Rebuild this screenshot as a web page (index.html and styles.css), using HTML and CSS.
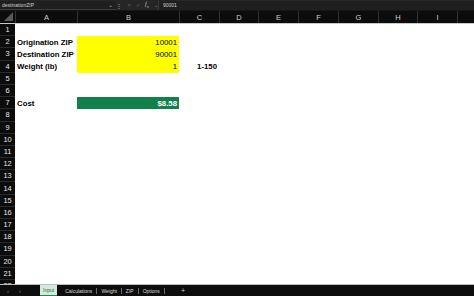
FILE: index.html
```html
<!DOCTYPE html>
<html>
<head>
<meta charset="utf-8">
<link rel="stylesheet" href="styles.css">
</head>
<body>
<div class="app">
  <div class="fbar">
    <div class="namebox"><span>destinationZIP</span><span class="dd">&#8964;</span></div>
    <div class="dots">&#8942;</div>
    <div class="ficons"><span class="dim">&#10005;</span><span class="dim">&#10003;</span><span class="fx"><i>f</i><sub>x</sub></span><span class="dd2">&#8964;</span></div>
    <div class="finput">90001</div>
  </div>
  <div class="sheet">
    <div class="hdr">
      <div class="corner"><svg width="9" height="9" viewBox="0 0 9 9"><polygon points="9,0 9,9 0,9" fill="#5a5a5a"/></svg></div>
      <div class="ch">A</div><div class="ch">B</div><div class="ch">C</div><div class="ch">D</div><div class="ch">E</div><div class="ch">F</div><div class="ch">G</div><div class="ch">H</div><div class="ch">I</div><div class="ch"></div>
    </div>
    <div class="rows">
      <div class="row"><div class="rh">1</div><div class="c"></div><div class="c"></div></div>
      <div class="row"><div class="rh">2</div><div class="c lbl">Origination ZIP</div><div class="c val yel">10001</div></div>
      <div class="row"><div class="rh">3</div><div class="c lbl">Destination ZIP</div><div class="c val yel">90001</div></div>
      <div class="row"><div class="rh">4</div><div class="c lbl">Weight (lb)</div><div class="c val yel">1</div><div class="c val rng">1-150</div></div>
      <div class="row"><div class="rh">5</div></div>
      <div class="row"><div class="rh">6</div></div>
      <div class="row"><div class="rh">7</div><div class="c lbl">Cost</div><div class="c val grn">$8.58</div></div>
      <div class="row"><div class="rh">8</div></div>
      <div class="row"><div class="rh">9</div></div>
      <div class="row"><div class="rh">10</div></div>
      <div class="row"><div class="rh">11</div></div>
      <div class="row"><div class="rh">12</div></div>
      <div class="row"><div class="rh">13</div></div>
      <div class="row"><div class="rh">14</div></div>
      <div class="row"><div class="rh">15</div></div>
      <div class="row"><div class="rh">16</div></div>
      <div class="row"><div class="rh">17</div></div>
      <div class="row"><div class="rh">18</div></div>
      <div class="row"><div class="rh">19</div></div>
      <div class="row"><div class="rh">20</div></div>
      <div class="row"><div class="rh">21</div></div>
      <div class="row"><div class="rh">22</div></div>
    </div>
  </div>
  <div class="tabs">
    <span class="nav">&#8249;</span><span class="nav">&#8250;</span>
    <span class="tab active">Input</span>
    <span class="tab">Calculations</span><span class="sep"></span>
    <span class="tab">Weight</span><span class="sep"></span>
    <span class="tab">ZIP</span><span class="sep"></span>
    <span class="tab">Options</span><span class="sep"></span>
    <span class="plus">+</span>
  </div>
</div>
</body>
</html>
```
FILE: styles.css
```css
* { box-sizing: border-box; }
html, body { margin: 0; padding: 0; }
body { width: 474px; height: 296px; overflow: hidden; background: #0f0f0f; font-family: "Liberation Sans", Arial, sans-serif; }
.app { display: flex; flex-direction: column; height: 296px; }

.fbar { height: 10px; background: #262626; display: flex; align-items: center; color: #cfcfcf; font-size: 5px; }
.namebox { width: 116px; height: 9px; display: flex; align-items: center; justify-content: space-between; padding: 0 3px 0 2px; background: #1f1f1f; border-bottom: 1px solid #3a3a3a; }
.namebox .dd { font-size: 6px; line-height: 4px; color: #aaa; }
.dots { width: 6px; text-align: center; color: #aaa; font-size: 6px; }
.ficons { display: flex; align-items: center; gap: 5px; padding-left: 5px; width: 36px; color: #cfcfcf; }
.ficons .dim { color: #5a5a5a; font-size: 5px; }
.ficons .fx { font-family: "Liberation Serif", serif; font-size: 6px; }
.ficons .fx sub { font-size: 4px; }
.ficons .dd2 { font-size: 5px; color: #888; line-height: 3px; }
.finput { flex: 1; height: 9px; padding-left: 4px; display: flex; align-items: center; background: #1f1f1f; border-left: 1px solid #3a3a3a; }

.sheet { flex: 1; display: flex; flex-direction: column; overflow: hidden; background: #ffffff; }
.hdr, .row { display: grid; grid-template-columns: 15px 62px 102px 40px 39px 40px 40px 40px 39px 40px 17px; }
.hdr { height: 14px; background: #0c0c0c; border-top: 1px solid #161616; border-bottom: 1px solid #c8c8c8; flex: none; }
.corner { display: flex; align-items: flex-end; justify-content: flex-end; padding: 0 2px 2px 0; }
.ch { color: #d0d0d0; font-size: 7.5px; display: flex; align-items: center; justify-content: center; border-left: 1px solid #333333; }

.rows { flex: 1; overflow: hidden; }
.row { height: 12.2px; overflow: hidden; }
.rh { background: #0c0c0c; color: #e6e6e6; font-size: 7.4px; display: flex; align-items: center; justify-content: center; border-bottom: 1px solid #2a2a2a; }
.c { font-size: 7.8px; color: #000; display: flex; align-items: center; padding: 0 2px; white-space: nowrap; }
.lbl { font-weight: bold; }
.val { justify-content: flex-end; }
.yel { background: #ffff00; }
.grn { background: #12804a; color: #ffffff; font-weight: bold; }
.rng { font-weight: bold; grid-column: 4; }

.tabs { height: 12px; background: #0d0d0d; border-top: 1px solid #bdbdbd; display: flex; align-items: center; color: #d8d8d8; font-size: 5px; flex: none; }
.nav { width: 12px; text-align: center; color: #8a8a8a; font-size: 6px; }
.nav:first-child { margin-left: 2px; }
.tab { padding: 0 4px; height: 11px; display: flex; align-items: center; }
.tab.active { margin-left: 14px; background: #d9e8dc; color: #1d6b3c; border-bottom: 1px solid #1d8a4a; padding: 0 3px; margin-right: 4px; }
.sep { width: 1px; height: 6px; background: #6a6a6a; }
.plus { margin-left: 16px; font-size: 7px; color: #cfcfcf; }
```
